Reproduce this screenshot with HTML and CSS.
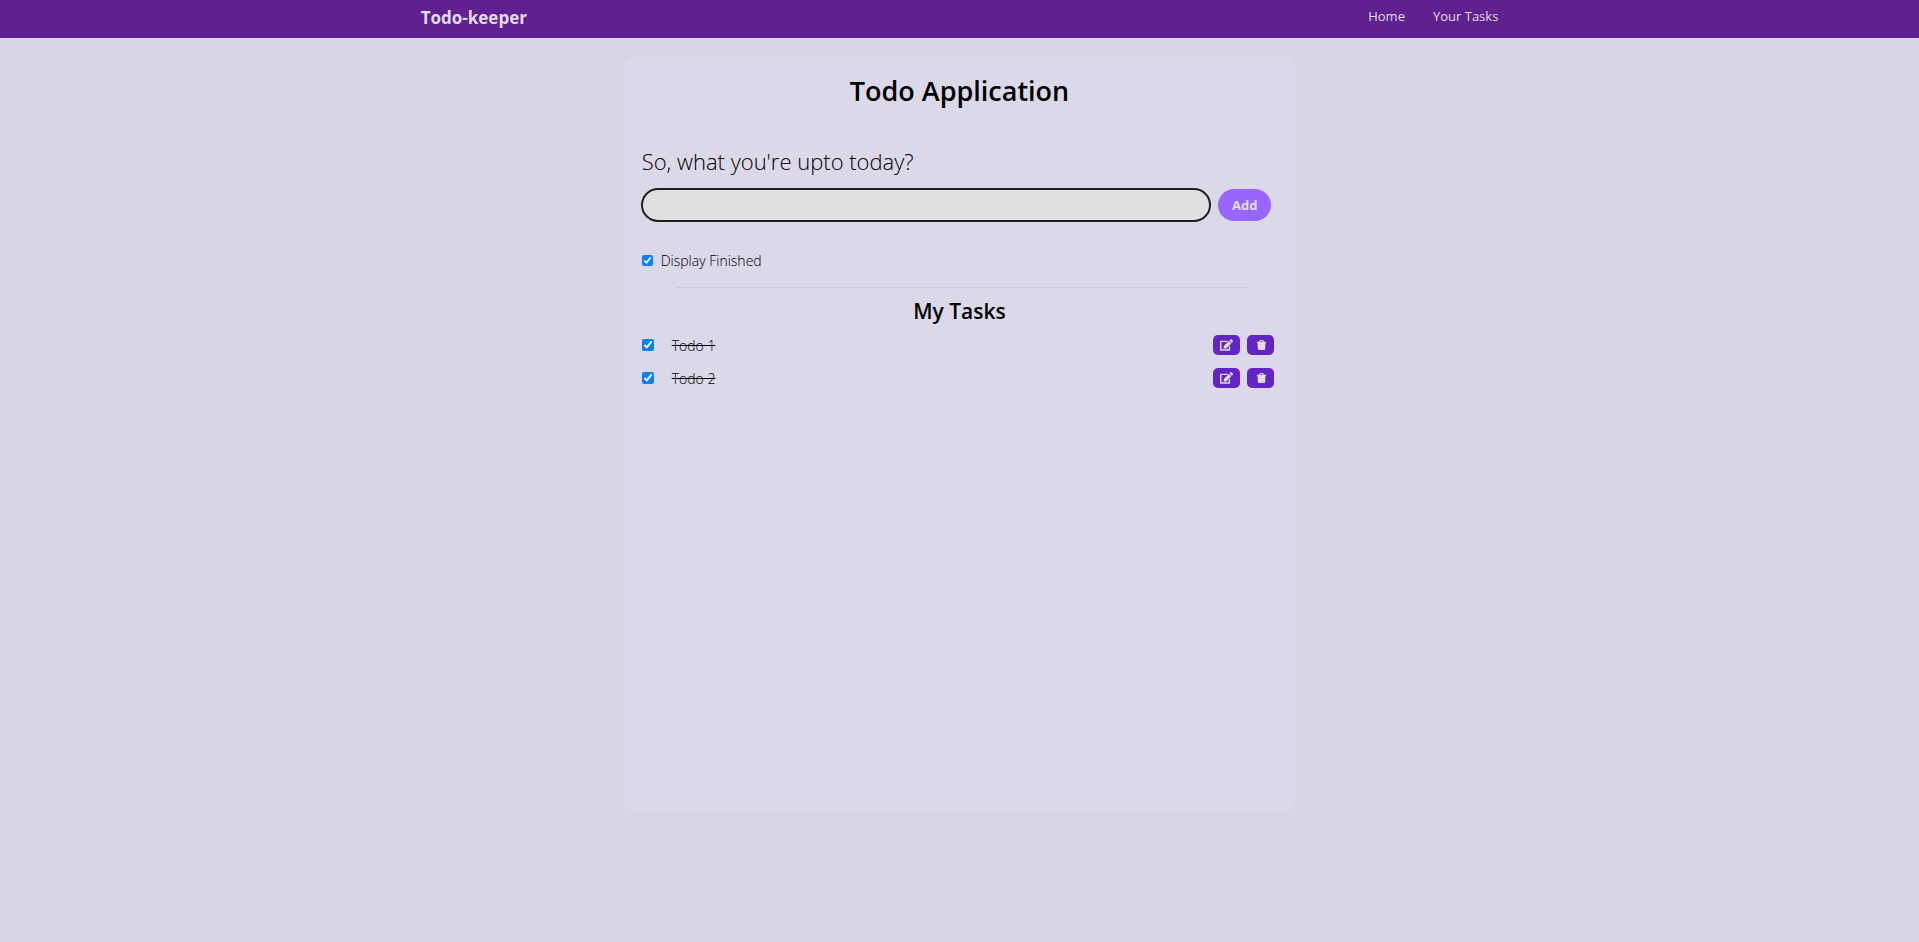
FILE: index.html
```html
<!DOCTYPE html>
<html lang="en">
<head>
<meta charset="utf-8">
<title>Todo-keeper</title>
<link rel="stylesheet" href="styles.css">
</head>
<body>
<svg class="sprite" aria-hidden="true">
  <symbol id="edit" viewBox="0 0 576 512"><path d="M402.600 83.200l90.200 90.200c3.800 3.800 3.800 10 0 13.800L274.400 405.600l-92.800 10.300c-12.400 1.400-22.900-9.100-21.500-21.500l10.300-92.800L388.800 83.200c3.800-3.800 10-3.800 13.800 0zm162-22.900l-48.800-48.800c-15.200-15.200-39.900-15.200-55.200 0l-35.400 35.400c-3.800 3.800-3.800 10 0 13.800l90.200 90.200c3.800 3.800 10 3.800 13.800 0l35.400-35.400c15.200-15.300 15.200-40 0-55.200zM384 346.200V448H64V128h229.800c3.200 0 6.200-1.300 8.500-3.500l40-40c7.600-7.600 2.200-20.500-8.500-20.500H48C21.500 64 0 85.500 0 112v352c0 26.500 21.500 48 48 48h352c26.500 0 48-21.500 48-48V306.200c0-10.700-12.900-16-20.500-8.500l-40 40c-2.200 2.300-3.500 5.300-3.500 8.500z"/></symbol>
  <symbol id="trash" viewBox="0 0 24 24"><path fill-rule="evenodd" d="M2 5h5V4q0-3 3-3h4q3 0 3 3v1h5v3h-1.500L20 20q0 3-3 3H7q-3 0-3-3L3.500 8H2zM9.500 3.500V5h5V3.500z"/></symbol>
</svg>
<nav class="navbar">
  <span class="brand">Todo-keeper</span>
  <div class="links"><a href="#home">Home</a><a href="#tasks">Your Tasks</a></div>
</nav>
<main class="card">
  <h1>Todo Application</h1>
  <form class="add-form">
    <label class="prompt" for="todo">So, what you're upto today?</label>
    <div class="entry">
      <input class="todo-input" id="todo" type="text">
      <button class="add" type="button">Add</button>
    </div>
  </form>
  <div class="filter">
    <input id="finished" type="checkbox" checked>
    <label for="finished">Display Finished</label>
  </div>
  <hr class="divider">
  <h2>My Tasks</h2>
  <ul class="tasks">
    <li class="task">
      <input id="t1" type="checkbox" checked>
      <label for="t1">Todo 1</label>
      <button class="action" type="button" aria-label="Edit"><svg><use href="#edit"/></svg></button>
      <button class="action" type="button" aria-label="Delete"><svg><use href="#trash"/></svg></button>
    </li>
    <li class="task">
      <input id="t2" type="checkbox" checked>
      <label for="t2">Todo 2</label>
      <button class="action" type="button" aria-label="Edit"><svg><use href="#edit"/></svg></button>
      <button class="action" type="button" aria-label="Delete"><svg><use href="#trash"/></svg></button>
    </li>
  </ul>
</main>
</body>
</html>
```
FILE: styles.css
```css
* { box-sizing: border-box; }
body {
  margin: 0;
  background: #d8d6e3;
  color: #000;
  font-family: "Segoe UI", "Open Sans", "Noto Sans", sans-serif;
  font-size: 14px;
}
.sprite { display: none; }
.navbar {
  display: flex;
  justify-content: space-around;
  height: 38px;
  padding-top: 4px;
  background: #602090;
  color: #e0dce6;
}
.brand { font-size: 17px; line-height: 28px; font-weight: 700; }
.links { display: flex; gap: 28px; line-height: 24px; }
.links a { color: inherit; text-decoration: none; font-size: 13px; font-weight: 500; }
.card {
  width: 35%;
  min-height: 757px;
  margin: 18px auto 0;
  padding: 15px 16px 16px;
  border-radius: 12px;
  background: #dbd8e9;
}
h1 { margin: 0; font-size: 27px; line-height: 40px; font-weight: 600; text-align: center; }
.prompt { display: block; margin: 34px 0 0 2px; font-size: 22px; line-height: 32px; font-weight: 300; }
.entry { display: flex; align-items: center; gap: 7px; margin: 11px 8px 0 1px; }
.todo-input {
  flex: 1;
  min-width: 0;
  height: 34px;
  padding: 0 16px;
  border: 2px solid #202020;
  border-radius: 17px;
  outline: none;
  background: #e0e0e0;
  font: inherit;
}
.add {
  width: 53px;
  height: 32px;
  padding: 0;
  border: 0;
  border-radius: 16px;
  background: #9966ff;
  color: #e2dfe8;
  font: inherit;
  font-size: 13px;
  font-weight: 700;
}
.filter { display: flex; align-items: center; gap: 8px; height: 20px; margin: 28px 0 0 2px; font-weight: 300; }
input[type="checkbox"] {
  flex: none;
  width: 12px;
  height: 12px;
  margin: 0;
  accent-color: #0a80ff;
}
.filter input[type="checkbox"] { width: 11px; height: 11px; }
.divider { height: 1px; margin: 17px 33px 0 35px; border: 0; background: #cecbdb; }
h2 { margin: 8px 0 0; font-size: 21px; line-height: 30px; font-weight: 600; text-align: center; }
.tasks { margin: 9px 5px 0 2px; padding: 0; list-style: none; display: grid; gap: 13px; }
.task { display: flex; align-items: center; gap: 7px; height: 20px; }
.task label { flex: 1; margin-left: 11px; font-weight: 300; text-decoration: line-through; }
.action {
  display: flex;
  align-items: center;
  justify-content: center;
  width: 27px;
  height: 20px;
  padding: 0;
  border: 0;
  border-radius: 5px;
  background: #6324c6;
}
.action svg { width: 13px; height: 12px; fill: #e0dce8; }
.action:last-child svg { width: 11px; height: 12px; margin-left: 1px; }
```
